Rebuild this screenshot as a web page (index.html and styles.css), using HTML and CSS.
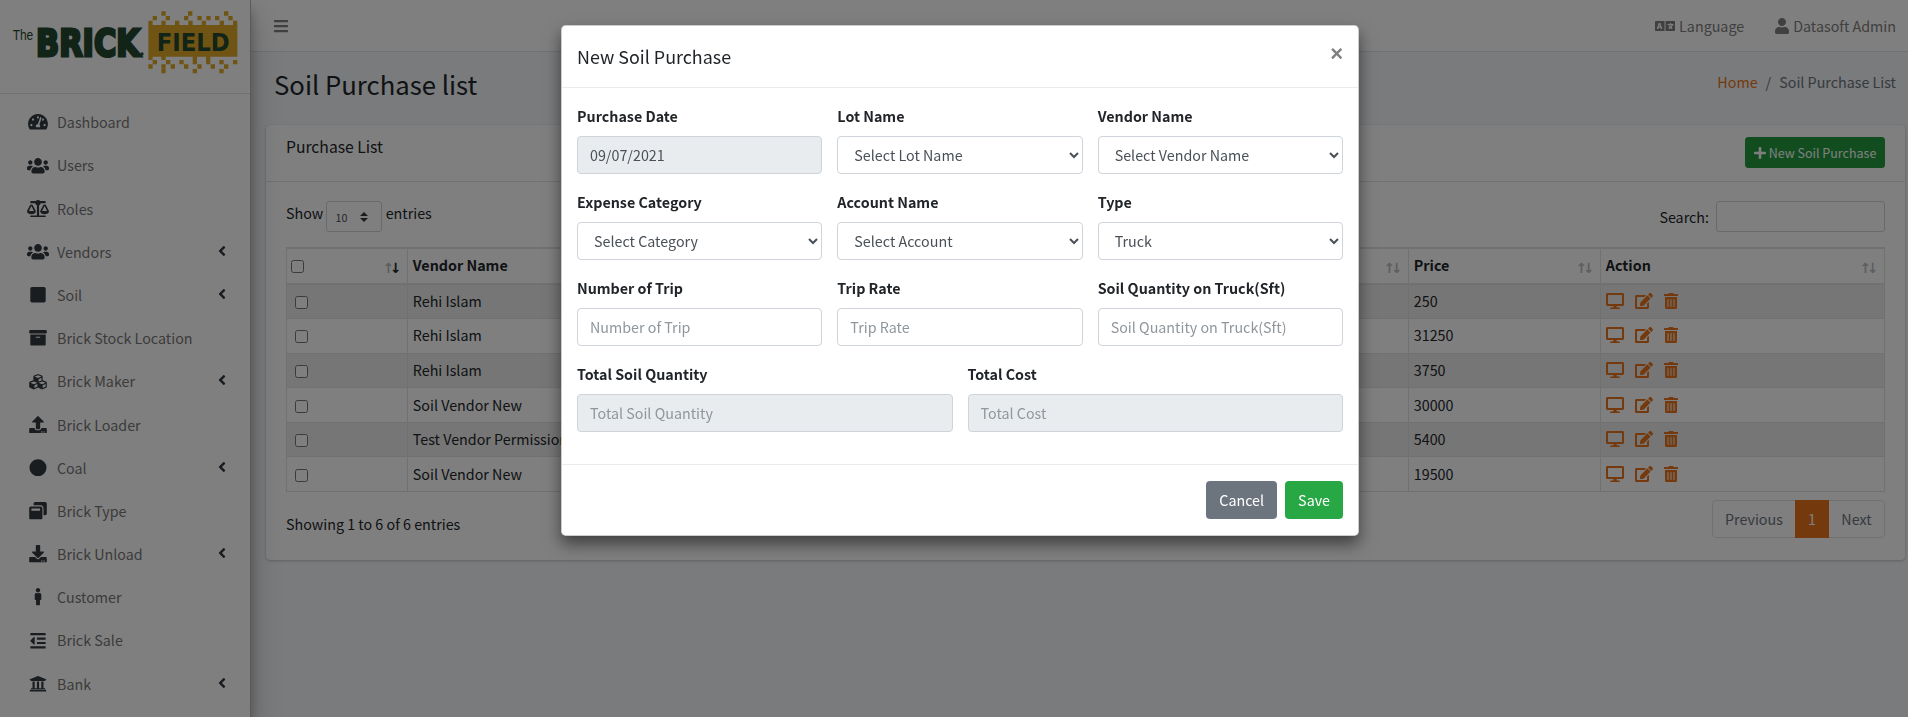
FILE: index.html
```html
<!DOCTYPE html>
<html lang="en">
<head>
    <meta charset="UTF-8">
    <meta name="viewport" content="width=device-width, initial-scale=1.0">
    <title>Soil Purchase list</title>
    <link rel="stylesheet" href="styles.css">
</head>
<body>

    <svg class="icon-defs" aria-hidden="true">
        <symbol id="i-bars" viewBox="0 0 448 512"><path d="M16 132h416c8.837 0 16-7.163 16-16V76c0-8.837-7.163-16-16-16H16C7.163 60 0 67.163 0 76v40c0 8.837 7.163 16 16 16zm0 160h416c8.837 0 16-7.163 16-16v-40c0-8.837-7.163-16-16-16H16c-8.837 0-16 7.163-16 16v40c0 8.837 7.163 16 16 16zm0 160h416c8.837 0 16-7.163 16-16v-40c0-8.837-7.163-16-16-16H16c-8.837 0-16 7.163-16 16v40c0 8.837 7.163 16 16 16z"/></symbol>
        <symbol id="i-language" viewBox="0 0 640 512"><path d="M152.1 236.2c-3.5-12.1-7.8-33.2-7.8-33.2h-.5s-4.3 21.1-7.8 33.2l-11.1 37.5H163zM616 96H336v320h280c13.3 0 24-10.7 24-24V120c0-13.3-10.7-24-24-24zm-24 120c0 6.6-5.4 12-12 12h-11.4c-6.9 23.6-21.7 47.4-42.7 69.9 8.4 6.4 17.1 12.5 26.1 18 5.5 3.4 7.3 10.5 4.1 16.2l-7.9 13.9c-3.4 5.9-10.9 7.8-16.7 4.3-12.6-7.8-24.5-16.1-35.4-24.9-10.9 8.7-22.7 17.1-35.4 24.9-5.8 3.5-13.3 1.6-16.7-4.3l-7.9-13.9c-3.2-5.6-1.4-12.8 4.2-16.2 9.3-5.7 18-11.7 26.1-18-7.9-8.4-14.9-17-21-25.7-4-5.7-2.2-13.6 3.7-17.1l6.5-3.9 7.3-4.3c5.4-3.2 12.4-1.7 16 3.4 5 7 10.8 14 17.4 20.9 13.5-14.2 23.8-28.9 30-43.2H412c-6.6 0-12-5.4-12-12v-16c0-6.6 5.4-12 12-12h64v-16c0-6.6 5.4-12 12-12h16c6.6 0 12 5.4 12 12v16h64c6.6 0 12 5.4 12 12zM0 120v272c0 13.3 10.7 24 24 24h280V96H24c-13.3 0-24 10.7-24 24zm58.9 216.1L116.4 167c1.7-4.9 6.2-8.1 11.4-8.1h32.5c5.1 0 9.7 3.3 11.4 8.1l57.5 169.1c2.6 7.8-3.1 15.9-11.4 15.9h-22.9a12 12 0 0 1-11.5-8.6l-9.4-31.9h-60.2l-9.1 31.8c-1.5 5.1-6.2 8.7-11.5 8.7H70.3c-8.2 0-14-8.1-11.4-15.9z"/></symbol>
        <symbol id="i-user" viewBox="0 0 448 512"><path d="M224 256c70.7 0 128-57.3 128-128S294.7 0 224 0 96 57.3 96 128s57.3 128 128 128zm89.6 32h-16.7c-22.2 10.2-46.9 16-72.9 16s-50.6-5.8-72.9-16h-16.7C60.2 288 0 348.2 0 422.4V464c0 26.5 21.5 48 48 48h352c26.5 0 48-21.5 48-48v-41.6c0-74.2-60.2-134.4-134.4-134.4z"/></symbol>
        <symbol id="i-angle" viewBox="0 0 256 512"><path d="M31.7 239l136-136c9.4-9.4 24.6-9.4 33.9 0l22.6 22.6c9.4 9.4 9.4 24.6 0 33.9L127.9 256l96.4 96.4c9.4 9.4 9.4 24.6 0 33.9L201.7 409c-9.4 9.4-24.6 9.4-33.9 0l-136-136c-9.5-9.4-9.5-24.6-.1-34z"/></symbol>
        <symbol id="i-gauge" viewBox="0 0 576 512"><path d="M288 32C128.94 32 0 160.94 0 320c0 52.8 14.25 102.26 39.06 144.8 5.61 9.62 16.3 15.2 27.44 15.2h443c11.14 0 21.83-5.58 27.44-15.2C561.75 422.26 576 372.8 576 320c0-159.06-128.94-288-288-288zm0 64c14.71 0 26.58 10.13 30.32 23.65-1.11 2.26-2.64 4.23-3.45 6.67l-9.22 27.67c-5.13 3.49-10.97 6.01-17.64 6.01-17.67 0-32-14.33-32-32S270.33 96 288 96zM96 384c-17.67 0-32-14.33-32-32s14.33-32 32-32 32 14.33 32 32-14.33 32-32 32zm48-160c-17.67 0-32-14.33-32-32s14.33-32 32-32 32 14.33 32 32-14.33 32-32 32zm246.77-72.41l-61.33 184C343.13 347.33 352 364.54 352 384c0 11.72-3.38 22.55-8.88 32H232.88c-5.5-9.45-8.88-20.28-8.88-32 0-33.94 26.5-61.43 59.9-63.59l61.34-184.01c4.17-12.56 17.73-19.45 30.36-15.17 12.57 4.19 19.35 17.79 15.17 30.36zm14.66 57.2l15.52-46.55c3.47-1.29 7.13-2.23 11.05-2.23 17.67 0 32 14.33 32 32s-14.33 32-32 32c-11.38-.01-20.89-6.28-26.57-15.22zM480 384c-17.67 0-32-14.33-32-32s14.33-32 32-32 32 14.33 32 32-14.33 32-32 32z"/></symbol>
        <symbol id="i-users" viewBox="0 0 640 512"><path d="M96 224c35.3 0 64-28.7 64-64s-28.7-64-64-64-64 28.7-64 64 28.7 64 64 64zm448 0c35.3 0 64-28.7 64-64s-28.7-64-64-64-64 28.7-64 64 28.7 64 64 64zm32 32h-64c-17.6 0-33.5 7.1-45.1 18.6 40.3 22.1 68.9 62 75.1 109.4h66c17.7 0 32-14.3 32-32v-32c0-35.3-28.7-64-64-64zm-256 0c61.9 0 112-50.1 112-112S381.9 32 320 32 208 82.1 208 144s50.1 112 112 112zm76.8 32h-8.3c-20.8 10-43.9 16-68.5 16s-47.6-6-68.5-16h-8.3C179.6 288 128 339.6 128 403.2V432c0 26.5 21.5 48 48 48h288c26.5 0 48-21.5 48-48v-28.8c0-63.6-51.6-115.2-115.2-115.2zm-223.7-13.4C161.5 263.1 145.6 256 128 256H64c-35.3 0-64 28.7-64 64v32c0 17.7 14.3 32 32 32h65.9c6.3-47.4 34.9-87.3 75.2-109.4z"/></symbol>
        <symbol id="i-scale" viewBox="0 0 640 512"><path d="M256 336h-.02c0-16.18 1.34-8.73-85.05-181.51-17.65-35.29-68.19-35.36-85.87 0C-2.06 328.75.02 320.33.02 336H0c0 44.18 57.31 80 128 80s128-35.82 128-80zM128 176l72 144H56l72-144zm511.98 160c0-16.18 1.34-8.73-85.05-181.51-17.65-35.29-68.19-35.36-85.87 0-87.12 174.26-85.04 165.84-85.04 181.51H384c0 44.18 57.31 80 128 80s128-35.82 128-80h-.02zM440 320l72-144 72 144H440zm88 128H352V153.25c23.51-10.29 41.16-31.48 46.39-57.25H528c8.84 0 16-7.16 16-16V48c0-8.84-7.16-16-16-16H383.64C369.04 12.68 346.09 0 320 0s-49.04 12.68-63.64 32H112c-8.84 0-16 7.16-16 16v32c0 8.84 7.16 16 16 16h129.61c5.23 25.76 22.87 46.96 46.39 57.25V448H112c-8.84 0-16 7.16-16 16v32c0 8.84 7.16 16 16 16h416c8.84 0 16-7.16 16-16v-32c0-8.84-7.16-16-16-16z"/></symbol>
        <symbol id="i-square" viewBox="0 0 448 512"><path d="M400 32H48C21.5 32 0 53.5 0 80v352c0 26.5 21.5 48 48 48h352c26.5 0 48-21.5 48-48V80c0-26.5-21.5-48-48-48z"/></symbol>
        <symbol id="i-archive" viewBox="0 0 512 512"><path d="M32 448c0 17.7 14.3 32 32 32h384c17.7 0 32-14.3 32-32V160H32v288zm160-212c0-6.6 5.4-12 12-12h104c6.6 0 12 5.4 12 12v8c0 6.6-5.4 12-12 12H204c-6.6 0-12-5.4-12-12v-8zM480 32H32C14.3 32 0 46.3 0 64v48c0 8.8 7.2 16 16 16h480c8.8 0 16-7.2 16-16V64c0-17.7-14.3-32-32-32z"/></symbol>
        <symbol id="i-cubes" viewBox="0 0 512 512"><path d="M488.6 250.2L392 214V105.5c0-15-9.3-28.4-23.4-33.7l-100-37.5c-8.1-3.1-17.1-3.1-25.3 0l-100 37.5c-14.1 5.3-23.4 18.7-23.4 33.7V214l-96.6 36.2C9.3 255.5 0 268.9 0 283.9V394c0 13.6 7.7 26.1 19.9 32.2l100 50c10.1 5.1 22.1 5.1 32.2 0l103.9-52 103.9 52c10.1 5.1 22.1 5.1 32.2 0l100-50c12.2-6.1 19.9-18.6 19.9-32.2V283.9c0-15-9.3-28.4-23.4-33.7zM358 214.8l-85 31.9v-68.2l85-37v73.3zM154 104.1l102-38.2 102 38.2v.6l-102 41.4-102-41.4v-.6zm84 291.1l-85 42.5v-79.1l85-38.8v75.4zm0-112l-102 41.4-102-41.4v-.6l102-38.2 102 38.2v.6zm240 112l-85 42.5v-79.1l85-38.8v75.4zm0-112l-102 41.4-102-41.4v-.6l102-38.2 102 38.2v.6z"/></symbol>
        <symbol id="i-upload" viewBox="0 0 512 512"><path d="M296 384h-80c-13.3 0-24-10.7-24-24V192h-87.7c-17.8 0-26.7-21.5-14.1-34.1L242.3 5.7c7.5-7.5 19.8-7.5 27.3 0l152.2 152.2c12.6 12.6 3.7 34.1-14.1 34.1H320v168c0 13.3-10.7 24-24 24zm216-8v112c0 13.3-10.7 24-24 24H24c-13.3 0-24-10.7-24-24V376c0-13.3 10.7-24 24-24h136v8c0 30.9 25.1 56 56 56h80c30.9 0 56-25.1 56-56v-8h136c13.3 0 24 10.7 24 24zm-124 88c0-11-9-20-20-20s-20 9-20 20 9 20 20 20 20-9 20-20zm64 0c0-11-9-20-20-20s-20 9-20 20 9 20 20 20 20-9 20-20z"/></symbol>
        <symbol id="i-circle" viewBox="0 0 512 512"><circle cx="256" cy="256" r="248"/></symbol>
        <symbol id="i-window" viewBox="0 0 512 512"><path d="M512 48v288c0 26.5-21.5 48-48 48h-48V176c0-44.1-35.9-80-80-80H128V48c0-26.5 21.5-48 48-48h288c26.5 0 48 21.5 48 48zM384 176v288c0 26.5-21.5 48-48 48H48c-26.5 0-48-21.5-48-48V176c0-26.5 21.5-48 48-48h288c26.5 0 48 21.5 48 48zm-68 28c0-6.6-5.4-12-12-12H76c-6.6 0-12 5.4-12 12v52h252v-52z"/></symbol>
        <symbol id="i-download" viewBox="0 0 512 512"><path d="M216 0h80c13.3 0 24 10.7 24 24v168h87.7c17.8 0 26.7 21.5 14.1 34.1L269.7 378.3c-7.5 7.5-19.8 7.5-27.3 0L90.1 226.1c-12.6-12.6-3.7-34.1 14.1-34.1H192V24c0-13.3 10.7-24 24-24zm296 376v112c0 13.3-10.7 24-24 24H24c-13.3 0-24-10.7-24-24V376c0-13.3 10.7-24 24-24h146.7l49 49c20.1 20.1 52.5 20.1 72.6 0l49-49H488c13.3 0 24 10.7 24 24zm-124 88c0-11-9-20-20-20s-20 9-20 20 9 20 20 20 20-9 20-20zm64 0c0-11-9-20-20-20s-20 9-20 20 9 20 20 20 20-9 20-20z"/></symbol>
        <symbol id="i-male" viewBox="0 0 192 512"><path d="M96 0c35.346 0 64 28.654 64 64s-28.654 64-64 64-64-28.654-64-64S60.654 0 96 0m48 144h-11.36c-22.711 10.443-49.59 10.894-73.28 0H48c-26.51 0-48 21.49-48 48v136c0 13.255 10.745 24 24 24h16v136c0 13.255 10.745 24 24 24h64c13.255 0 24-10.745 24-24V352h16c13.255 0 24-10.745 24-24V192c0-26.51-21.49-48-48-48z"/></symbol>
        <symbol id="i-outdent" viewBox="0 0 448 512"><path d="M100.69 363.29c10 10 27.31 2.93 27.31-11.31V160c0-14.32-17.33-21.31-27.31-11.31l-96 96a16 16 0 0 0 0 22.62zM432 416H16a16 16 0 0 0-16 16v32a16 16 0 0 0 16 16h416a16 16 0 0 0 16-16v-32a16 16 0 0 0-16-16zm3.17-128H204.83A12.82 12.82 0 0 0 192 300.83v38.34A12.82 12.82 0 0 0 204.83 352h230.34A12.82 12.82 0 0 0 448 339.17v-38.34A12.82 12.82 0 0 0 435.17 288zm0-128H204.83A12.82 12.82 0 0 0 192 172.83v38.34A12.82 12.82 0 0 0 204.83 224h230.34A12.82 12.82 0 0 0 448 211.17v-38.34A12.82 12.82 0 0 0 435.17 160zM432 32H16A16 16 0 0 0 0 48v32a16 16 0 0 0 16 16h416a16 16 0 0 0 16-16V48a16 16 0 0 0-16-16z"/></symbol>
        <symbol id="i-bank" viewBox="0 0 512 512"><path d="M496 128v16a8 8 0 0 1-8 8h-24v12c0 6.627-5.373 12-12 12H60c-6.627 0-12-5.373-12-12v-12H24a8 8 0 0 1-8-8v-16a8 8 0 0 1 4.941-7.392l232-88a7.996 7.996 0 0 1 6.118 0l232 88A8 8 0 0 1 496 128zm-24 304H40c-13.255 0-24 10.745-24 24v16a8 8 0 0 0 8 8h464a8 8 0 0 0 8-8v-16c0-13.255-10.745-24-24-24zM96 192v192H60c-6.627 0-12 5.373-12 12v20h416v-20c0-6.627-5.373-12-12-12h-36V192h-64v192h-64V192h-64v192h-64V192H96z"/></symbol>
        <symbol id="i-plus" viewBox="0 0 448 512"><path d="M416 208H272V64c0-17.67-14.33-32-32-32h-32c-17.67 0-32 14.33-32 32v144H32c-17.67 0-32 14.33-32 32v32c0 17.67 14.33 32 32 32h144v144c0 17.67 14.33 32 32 32h32c17.67 0 32-14.33 32-32V304h144c17.67 0 32-14.33 32-32v-32c0-17.67-14.33-32-32-32z"/></symbol>
        <symbol id="i-desktop" viewBox="0 0 576 512"><path d="M528 0H48C21.5 0 0 21.5 0 48v320c0 26.5 21.5 48 48 48h192l-16 48h-72c-13.3 0-24 10.7-24 24s10.7 24 24 24h272c13.3 0 24-10.7 24-24s-10.7-24-24-24h-72l-16-48h192c26.5 0 48-21.5 48-48V48c0-26.5-21.5-48-48-48zm-16 352H64V64h448v288z"/></symbol>
        <symbol id="i-edit" viewBox="0 0 576 512"><path d="M402.6 83.2l90.2 90.2c3.8 3.8 3.8 10 0 13.8L274.4 405.6l-92.8 10.3c-12.4 1.4-22.9-9.1-21.5-21.5l10.3-92.8L388.8 83.2c3.8-3.8 10-3.8 13.8 0zm162-22.9l-48.8-48.8c-15.2-15.2-39.9-15.2-55.2 0l-35.4 35.4c-3.8 3.8-3.8 10 0 13.8l90.2 90.2c3.8 3.8 10 3.8 13.8 0l35.4-35.4c15.2-15.3 15.2-40 0-55.2zM384 346.2V448H64V128h229.8c3.2 0 6.2-1.3 8.5-3.5l40-40c7.6-7.6 2.2-20.5-8.5-20.5H48C21.5 64 0 85.5 0 112v352c0 26.5 21.5 48 48 48h352c26.5 0 48-21.5 48-48V306.2c0-10.7-12.9-16-20.5-8.5l-40 40c-2.2 2.3-3.5 5.3-3.5 8.5z"/></symbol>
        <symbol id="i-trash" viewBox="0 0 448 512"><path d="M32 464a48 48 0 0 0 48 48h288a48 48 0 0 0 48-48V128H32zm272-256a16 16 0 0 1 32 0v224a16 16 0 0 1-32 0zm-96 0a16 16 0 0 1 32 0v224a16 16 0 0 1-32 0zm-96 0a16 16 0 0 1 32 0v224a16 16 0 0 1-32 0zM432 32H312l-9.4-18.7A24 24 0 0 0 281.1 0H166.8a23.72 23.72 0 0 0-21.4 13.3L136 32H16A16 16 0 0 0 0 48v32a16 16 0 0 0 16 16h416a16 16 0 0 0 16-16V48a16 16 0 0 0-16-16z"/></symbol>
    </svg>

    <div class="wrapper">
        <aside class="sidebar">
            <div class="brand">
                <svg class="logo" viewBox="0 0 750 279" role="img" aria-label="The Brick Field">
                    <path class="logo-gold" d="M445 75h267v95H445zM484 34h13v13h-13zM564 34h13v13h-13zM672 34h13v13h-13zM458 48h13v13h-13zM497 48h13v13h-13zM552 48h13v13h-13zM592 48h13v13h-13zM619 48h13v13h-13zM645 48h13v13h-13zM685 48h13v13h-13zM445 62h13v13h-13zM484 62h13v13h-13zM525 62h13v13h-13zM565 62h13v13h-13zM605 62h13v13h-13zM659 62h13v13h-13zM699 62h13v13h-13zM445 167h13v13h-13zM484 167h13v13h-13zM538 180h13v13h-13zM578 167h13v13h-13zM618 167h13v13h-13zM699 180h13v13h-13zM458 180h13v13h-13zM498 180h13v13h-13zM578 180h13v13h-13zM618 180h13v13h-13zM658 180h13v13h-13zM445 193h13v13h-13zM484 193h13v13h-13zM512 193h13v13h-13zM552 193h13v13h-13zM592 193h13v13h-13zM632 193h13v13h-13zM672 193h13v13h-13zM484 207h13v13h-13zM578 207h13v13h-13zM658 207h13v13h-13z"/>
                    <text class="logo-the" transform="translate(38 121) scale(.78 1)">The</text>
                    <text class="logo-brick" transform="translate(108 167) scale(.8 1)">BRICK</text>
                    <circle class="logo-dot" cx="426" cy="162" r="5"/>
                    <text class="logo-field" transform="translate(470 153) scale(.95 1)">FIELD</text>
                </svg>
            </div>
            <nav class="side-nav">
                <a class="nav-item"><svg class="nav-icon"><use href="#i-gauge"/></svg><span>Dashboard</span></a>
                <a class="nav-item"><svg class="nav-icon"><use href="#i-users"/></svg><span>Users</span></a>
                <a class="nav-item"><svg class="nav-icon"><use href="#i-scale"/></svg><span>Roles</span></a>
                <a class="nav-item"><svg class="nav-icon"><use href="#i-users"/></svg><span>Vendors</span><svg class="nav-arrow"><use href="#i-angle"/></svg></a>
                <a class="nav-item"><svg class="nav-icon"><use href="#i-square"/></svg><span>Soil</span><svg class="nav-arrow"><use href="#i-angle"/></svg></a>
                <a class="nav-item"><svg class="nav-icon"><use href="#i-archive"/></svg><span>Brick Stock Location</span></a>
                <a class="nav-item"><svg class="nav-icon"><use href="#i-cubes"/></svg><span>Brick Maker</span><svg class="nav-arrow"><use href="#i-angle"/></svg></a>
                <a class="nav-item"><svg class="nav-icon"><use href="#i-upload"/></svg><span>Brick Loader</span></a>
                <a class="nav-item"><svg class="nav-icon"><use href="#i-circle"/></svg><span>Coal</span><svg class="nav-arrow"><use href="#i-angle"/></svg></a>
                <a class="nav-item"><svg class="nav-icon"><use href="#i-window"/></svg><span>Brick Type</span></a>
                <a class="nav-item"><svg class="nav-icon"><use href="#i-download"/></svg><span>Brick Unload</span><svg class="nav-arrow"><use href="#i-angle"/></svg></a>
                <a class="nav-item"><svg class="nav-icon"><use href="#i-male"/></svg><span>Customer</span></a>
                <a class="nav-item"><svg class="nav-icon"><use href="#i-outdent"/></svg><span>Brick Sale</span></a>
                <a class="nav-item"><svg class="nav-icon"><use href="#i-bank"/></svg><span>Bank</span><svg class="nav-arrow"><use href="#i-angle"/></svg></a>
            </nav>
        </aside>

        <div class="main">
            <header class="topbar">
                <svg class="bars-icon"><use href="#i-bars"/></svg>
                <div class="top-links">
                    <a class="top-link"><svg class="lang-icon"><use href="#i-language"/></svg>Language</a>
                    <a class="top-link"><svg class="user-icon"><use href="#i-user"/></svg>Datasoft Admin</a>
                </div>
            </header>

            <div class="content">
                <div class="page-head">
                    <h1>Soil Purchase list</h1>
                    <div class="breadcrumb"><a class="link">Home</a><span class="crumb-sep">/</span><span>Soil Purchase List</span></div>
                </div>

                <section class="card">
                    <div class="card-header">
                        <h3>Purchase List</h3>
                        <button class="btn-new"><svg class="plus-icon"><use href="#i-plus"/></svg>New Soil Purchase</button>
                    </div>
                    <div class="card-body">
                        <div class="table-top">
                            <div class="length">Show <span class="length-select">10</span> entries</div>
                            <div class="search">Search: <input type="text" class="search-input"></div>
                        </div>

                        <table class="list-table">
                            <colgroup>
                                <col class="col-check"><col class="col-vendor"><col class="col-rest"><col class="col-price"><col>
                            </colgroup>
                            <thead>
                                <tr>
                                    <th class="th-check"><input type="checkbox"><span class="sort"><span class="off">↑</span><span>↓</span></span></th>
                                    <th>Vendor Name<span class="sort"><span class="off">↑</span><span class="off">↓</span></span></th>
                                    <th><span class="sort"><span class="off">↑</span><span class="off">↓</span></span></th>
                                    <th>Price<span class="sort"><span class="off">↑</span><span class="off">↓</span></span></th>
                                    <th>Action<span class="sort"><span class="off">↑</span><span class="off">↓</span></span></th>
                                </tr>
                            </thead>
                            <tbody id="rows"></tbody>
                        </table>

                        <div class="table-bottom">
                            <div class="info">Showing 1 to 6 of 6 entries</div>
                            <div class="pagination">
                                <a class="page page-prev">Previous</a><a class="page active">1</a><a class="page page-next">Next</a>
                            </div>
                        </div>
                    </div>
                </section>
            </div>
        </div>
    </div>

    <div class="backdrop"></div>

    <div class="modal">
        <div class="modal-header">
            <h4>New Soil Purchase</h4>
            <span class="close">×</span>
        </div>
        <div class="modal-body">
            <div class="form-row">
                <div class="form-group">
                    <label>Purchase Date</label>
                    <input class="form-control" type="text" value="09/07/2021" disabled>
                </div>
                <div class="form-group">
                    <label>Lot Name</label>
                    <select class="form-control"><option>Select Lot Name</option></select>
                </div>
                <div class="form-group">
                    <label>Vendor Name</label>
                    <select class="form-control"><option>Select Vendor Name</option></select>
                </div>
            </div>
            <div class="form-row">
                <div class="form-group">
                    <label>Expense Category</label>
                    <select class="form-control"><option>Select Category</option></select>
                </div>
                <div class="form-group">
                    <label>Account Name</label>
                    <select class="form-control"><option>Select Account</option></select>
                </div>
                <div class="form-group">
                    <label>Type</label>
                    <select class="form-control"><option>Truck</option></select>
                </div>
            </div>
            <div class="form-row">
                <div class="form-group">
                    <label>Number of Trip</label>
                    <input class="form-control" type="text" placeholder="Number of Trip">
                </div>
                <div class="form-group">
                    <label>Trip Rate</label>
                    <input class="form-control" type="text" placeholder="Trip Rate">
                </div>
                <div class="form-group">
                    <label>Soil Quantity on Truck(Sft)</label>
                    <input class="form-control" type="text" placeholder="Soil Quantity on Truck(Sft)">
                </div>
            </div>
            <div class="form-row">
                <div class="form-group">
                    <label>Total Soil Quantity</label>
                    <input class="form-control" type="text" placeholder="Total Soil Quantity" disabled>
                </div>
                <div class="form-group">
                    <label>Total Cost</label>
                    <input class="form-control" type="text" placeholder="Total Cost" disabled>
                </div>
            </div>
        </div>
        <div class="modal-footer">
            <button class="btn btn-cancel">Cancel</button>
            <button class="btn btn-save">Save</button>
        </div>
    </div>

    <script>
        const purchases = [
            ["Rehi Islam", "250"],
            ["Rehi Islam", "31250"],
            ["Rehi Islam", "3750"],
            ["Soil Vendor New", "30000"],
            ["Test Vendor Permission", "5400"],
            ["Soil Vendor New", "19500"]
        ];

        const actions = '<svg class="act act-desktop"><use href="#i-desktop"/></svg>' +
            '<svg class="act act-edit"><use href="#i-edit"/></svg>' +
            '<svg class="act act-trash"><use href="#i-trash"/></svg>';

        const body = document.getElementById("rows");
        purchases.forEach(function (row) {
            const tr = body.insertRow();
            tr.insertCell().innerHTML = '<input type="checkbox">';
            tr.insertCell().textContent = row[0];
            tr.insertCell();
            tr.insertCell().textContent = row[1];
            tr.insertCell().innerHTML = actions;
        });
    </script>
</body>
</html>
```

FILE: styles.css
```css
* {
    box-sizing: border-box;
}

html, body {
    height: 100%;
}

body {
    margin: 0;
    overflow: hidden;
    font-family: "Noto Sans CJK SC", "Noto Sans", sans-serif;
    font-size: 14.3px;
    line-height: 24px;
    color: #212529;
    background-color: #f4f6f9;
}

.icon-defs {
    display: none;
}

svg {
    fill: currentColor;
}

.wrapper {
    display: flex;
    height: 717px;
}

/* sidebar */
.sidebar {
    width: 251px;
    flex: none;
    background-color: #fff;
    border-right: 1px solid #b5b5b5;
    box-shadow: 0 14px 28px rgba(0, 0, 0, .25), 0 10px 10px rgba(0, 0, 0, .22);
    position: relative;
    z-index: 2;
}

.brand {
    height: 94px;
    border-bottom: 1px solid #dee2e6;
}

.logo {
    display: block;
    width: 250px;
    height: 93px;
}

.logo-gold {
    fill: #e0a828;
}

.logo-the {
    font-family: "Liberation Sans", sans-serif;
    font-size: 46px;
    fill: #24482f;
}

.logo-brick {
    font-family: "DejaVu Sans", sans-serif;
    font-weight: bold;
    font-size: 114px;
    fill: #24482f;
    stroke: #24482f;
    stroke-width: 9px;
}

.logo-dot {
    fill: #24482f;
}

.logo-field {
    font-family: "DejaVu Sans", sans-serif;
    font-weight: bold;
    font-size: 72px;
    fill: #24482f;
}

.side-nav {
    padding-top: 6.6px;
}

.nav-item {
    display: flex;
    align-items: center;
    height: 43.2px;
    padding: 0 24px 0 25px;
    color: #777;
}

.nav-icon {
    width: 26px;
    height: 17.6px;
    margin-right: 6px;
    color: #343a40;
    flex: none;
}

.nav-arrow {
    width: 8px;
    height: 16px;
    margin-left: auto;
    margin-top: -2px;
    color: #343a40;
}

/* top bar */
.main {
    flex: 1;
    min-width: 0;
}

.topbar {
    height: 52px;
    display: flex;
    align-items: center;
    justify-content: space-between;
    padding: 0 12px 0 23px;
    background-color: #fff;
    border-bottom: 1px solid #dee2e6;
}

.bars-icon {
    width: 14px;
    height: 16px;
    color: #808080;
}

.top-links {
    display: flex;
    gap: 31px;
}

.top-link {
    display: flex;
    align-items: center;
    color: #808080;
}

.lang-icon {
    width: 20px;
    height: 16px;
    margin-right: 4px;
}

.user-icon {
    width: 14px;
    height: 16px;
    margin-right: 4px;
}

/* content */
.content {
    padding: 0 3px 0 15px;
}

.page-head {
    display: flex;
    justify-content: space-between;
    padding: 14px 9px 23px 8px;
    height: 73px;
}

h1 {
    margin: 0;
    font-size: 25.7px;
    font-weight: 400;
    line-height: 35px;
    color: #212529;
}

.breadcrumb {
    margin-top: 4px;
    color: #6c757d;
}

.link {
    color: #e8741a;
}

.crumb-sep {
    padding: 0 8px;
}

.card {
    height: 435px;
    background-color: #fff;
    border-radius: 4px;
    box-shadow: 0 0 1px rgba(0, 0, 0, .125), 0 1px 3px rgba(0, 0, 0, .2);
}

.card-header {
    height: 57px;
    display: flex;
    justify-content: space-between;
    padding: 12px 20px 0 20px;
    border-bottom: 1px solid #dee2e6;
}

.card-header h3 {
    margin: 0;
    font-size: 15.7px;
    font-weight: 400;
    line-height: 19px;
}

.btn-new {
    height: 31px;
    width: 140px;
    padding: 0;
    display: flex;
    align-items: center;
    justify-content: center;
    white-space: nowrap;
    font-family: inherit;
    font-size: 12.5px;
    color: #fff;
    background-color: #239a3e;
    border: 1px solid #239a3e;
    border-radius: 3px;
}

.plus-icon {
    width: 12px;
    height: 14px;
    margin-right: 3px;
}

.card-body {
    padding: 19px 20px 0 20px;
}

.table-top {
    display: flex;
    justify-content: space-between;
    height: 31px;
    margin-bottom: 15px;
}

.length-select {
    display: inline-block;
    vertical-align: top;
    width: 56px;
    height: 31px;
    padding: 4px 8px;
    font-size: 10.7px;
    color: #495057;
    border: 1px solid #ced4da;
    border-radius: 3px;
    background: url("data:image/svg+xml,%3Csvg xmlns='http://www.w3.org/2000/svg' width='8' height='10'%3E%3Cpath fill='%23343a40' d='M4 0l4 4H0zM4 10L0 6h8z'/%3E%3C/svg%3E") no-repeat right 13px center;
}

.search {
    display: flex;
    gap: 7px;
    align-items: center;
}

.search-input {
    width: 169px;
    height: 31px;
    border: 1px solid #ced4da;
    border-radius: 3px;
}

/* table */
.list-table {
    width: 100%;
    table-layout: fixed;
    border-collapse: collapse;
    border: 1px solid #dee2e6;
}

.col-check {
    width: 121px;
}

.col-vendor {
    width: 600px;
}

.col-rest {
    width: 401px;
}

.col-price {
    width: 192px;
}

.list-table th, .list-table td {
    padding: 4.2px 4.8px 5.4px;
    text-align: left;
    border: 1px solid #dee2e6;
    white-space: nowrap;
    overflow: hidden;
}

.list-table th {
    position: relative;
    padding-top: 3.8px;
    padding-bottom: 5.8px;
    border-top-width: 2px;
    border-bottom-width: 2px;
}

.list-table td:first-child {
    padding-left: 8px;
}

.list-table th.th-check {
    padding-left: 4px;
}

input[type="checkbox"] {
    margin: 0;
    width: 13px;
    height: 13px;
    vertical-align: -2px;
}

.list-table tbody tr:nth-child(odd) {
    background-color: rgba(0, 0, 0, .07);
}

.sort {
    position: absolute;
    right: 10px;
    top: 7px;
    font-family: "DejaVu Sans", sans-serif;
    font-size: 14px;
    font-weight: 700;
    letter-spacing: -4.5px;
}

.off {
    opacity: .3;
}

.act {
    height: 16px;
    vertical-align: -2px;
    color: #e8741a;
}

.act-desktop {
    width: 18px;
    margin-right: 11px;
}

.act-edit {
    width: 18px;
    margin-right: 11px;
}

.act-trash {
    width: 14px;
}

.table-bottom {
    display: flex;
    justify-content: space-between;
    margin-top: 8px;
}

.info {
    padding-top: 12px;
}

.pagination {
    display: flex;
    height: 38px;
    border: 1px solid #dee2e6;
    border-radius: 4px;
    line-height: 36px;
    color: #6c757d;
}

.page {
    text-align: center;
}

.page-prev {
    width: 82px;
}

.page-next {
    width: 55px;
}

.page.active {
    width: 34px;
    margin: -1px 0;
    line-height: 38px;
    color: #fff;
    background-color: #e8741a;
}

/* modal */
.backdrop {
    position: fixed;
    top: 0;
    left: 0;
    right: 0;
    bottom: 0;
    z-index: 10;
    background-color: rgba(0, 0, 0, .5);
}

.modal {
    position: absolute;
    top: 25px;
    left: 561px;
    width: 798px;
    z-index: 11;
    background-color: #fff;
    border: 1px solid rgba(0, 0, 0, .2);
    border-radius: 4.8px;
    box-shadow: 0 8px 16px rgba(0, 0, 0, .5);
}

.modal-header {
    height: 62px;
    display: flex;
    justify-content: space-between;
    padding: 16px 15px;
    border-bottom: 1px solid #e9ecef;
}

.modal-header h4 {
    margin: 0;
    font-size: 17.9px;
    font-weight: 400;
    line-height: 28px;
}

.close {
    font-family: "Liberation Sans", sans-serif;
    font-size: 22px;
    font-weight: 700;
    line-height: 24px;
    color: #808080;
}

.modal-body {
    padding: 16px 15px;
}

.form-row {
    display: flex;
    gap: 15px;
}

.form-group {
    flex: 1 1 0;
    min-width: 0;
    margin-bottom: 16px;
}

.form-group label {
    display: block;
    margin-bottom: 8px;
    font-weight: 700;
}

.form-control {
    display: block;
    width: 100%;
    height: 38px;
    padding: 5px 12px 7px;
    font-family: inherit;
    font-size: 14.3px;
    color: #495057;
    background-color: #fff;
    border: 1px solid #ced4da;
    border-radius: 4px;
}

.form-control::placeholder {
    color: #8f969c;
}

.form-control:disabled {
    background-color: #e9ecef;
    opacity: 1;
}

.modal-footer {
    display: flex;
    justify-content: flex-end;
    gap: 8px;
    padding: 16px 15px;
    border-top: 1px solid #e9ecef;
}

.btn {
    height: 38px;
    padding: 0 12px 2px;
    font-family: inherit;
    font-size: 14.3px;
    color: #fff;
    border: 1px solid transparent;
    border-radius: 4px;
}

.btn-cancel {
    background-color: #6c757d;
}

.btn-save {
    background-color: #28a745;
}
```
